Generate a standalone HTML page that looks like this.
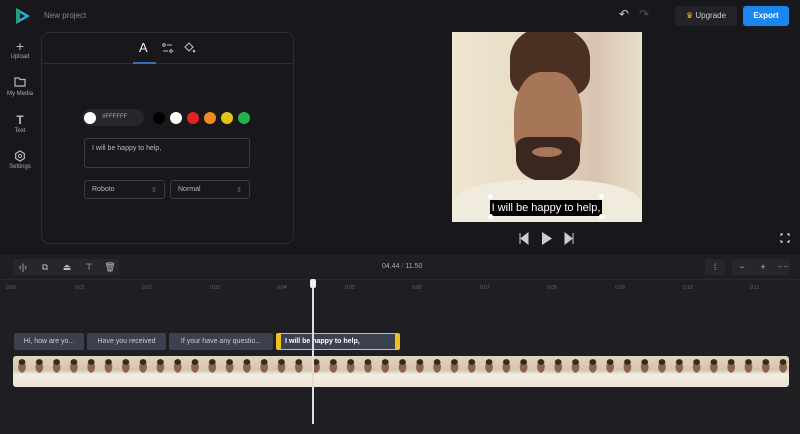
<!DOCTYPE html>
<html><head><meta charset="utf-8"><style>
*{box-sizing:border-box;margin:0;padding:0}
body{width:800px;height:434px;overflow:hidden;background:#17171c;font-family:"Liberation Sans",sans-serif;color:#ccc;position:relative}
.a{position:absolute}
.side div{position:absolute;left:0;width:40px;text-align:center;font-size:6px;color:#aaa}
.sw{position:absolute;top:112px;width:12px;height:12px;border-radius:50%}
.tl{font-size:5px;color:#666;top:285px}
.chip{position:absolute;top:333px;height:17px;background:#3b4150;border-radius:2px;font-size:7px;color:#c8ccd4;text-align:center;line-height:17px}
.btn{position:absolute;top:259px;height:16px;background:#26262b;border-radius:2px;color:#bbb;font-size:9px;text-align:center;line-height:16px}
</style></head><body>
<svg class="a" style="left:12px;top:6px" width="20" height="20" viewBox="0 0 20 20"><path d="M4 2 L18 10 L4 18 Z" fill="#1fb7d6"/><path d="M4 2 L4 18 L9 12 L9 7Z" fill="#20a080"/><path d="M8 7 L13 10 L8 13Z" fill="#17171c"/></svg>
<div class="a" style="left:44px;top:11px;font-size:8px;color:#888">New project</div>
<div class="side">
<div style="top:38px;font-size:14px;color:#bbb">+</div><div style="top:54px">Upload</div>
<div style="top:77px"><svg width="12" height="10" viewBox="0 0 12 10"><path d="M1 1h4l1 1.5h5v6.5h-10z" fill="none" stroke="#bbb" stroke-width="1.2"/></svg></div><div style="top:91px">My Media</div>
<div style="top:113px;font-size:12px;color:#bbb;font-weight:bold">T</div><div style="top:128px">Text</div>
<div style="top:150px"><svg width="12" height="12" viewBox="0 0 12 12"><path d="M6 1l4.3 2.5v5L6 11 1.7 8.5v-5z" fill="none" stroke="#bbb" stroke-width="1.2"/><circle cx="6" cy="6" r="1.6" fill="none" stroke="#bbb"/></svg></div><div style="top:164px">Settings</div>
</div>
<div class="a" style="left:41px;top:32px;width:253px;height:212px;border:1px solid #2c2c33;border-radius:8px"></div>
<div class="a" style="left:42px;top:63px;width:251px;height:1px;background:#2c2c33"></div>
<div class="a" style="left:133px;top:62px;width:23px;height:2px;background:#3b6fb5"></div>
<div class="a" style="left:139px;top:40px;font-size:13px;color:#eee">A</div>
<svg class="a" style="left:162px;top:43px" width="11" height="10" viewBox="0 0 11 10"><circle cx="2" cy="2" r="1.3" fill="none" stroke="#bbb"/><path d="M5 2h5M1 8h5" stroke="#bbb"/><circle cx="9" cy="8" r="1.3" fill="none" stroke="#bbb"/></svg>
<svg class="a" style="left:184px;top:42px" width="12" height="12" viewBox="0 0 12 12"><path d="M5 1L1 5l4 4 4-4z" fill="none" stroke="#bbb" stroke-width="1.1"/><circle cx="10" cy="9" r="1.3" fill="#bbb"/></svg>
<div class="a" style="left:82px;top:109px;width:62px;height:17px;background:#26262c;border-radius:9px"></div>
<div class="sw" style="left:84px;background:#fff"></div>
<div class="a" style="left:102px;top:114px;font-size:6px;color:#aaa">#FFFFFF</div>
<div class="sw" style="left:153px;background:#000"></div>
<div class="sw" style="left:170px;background:#fff"></div>
<div class="sw" style="left:187px;background:#e52222"></div>
<div class="sw" style="left:204px;background:#f08a22"></div>
<div class="sw" style="left:221px;background:#e2c514"></div>
<div class="sw" style="left:238px;background:#22b34c"></div>
<div class="a" style="left:84px;top:138px;width:166px;height:30px;border:1px solid #3a3a42;border-radius:3px;font-size:7px;color:#bbb;padding:6px 7px">I will be happy to help,</div>
<div class="a" style="left:84px;top:180px;width:81px;height:19px;border:1px solid #3a3a42;border-radius:3px;font-size:7px;color:#bbb;padding:5px 7px">Roboto<span style="float:right;color:#888">⇳</span></div>
<div class="a" style="left:170px;top:180px;width:80px;height:19px;border:1px solid #3a3a42;border-radius:3px;font-size:7px;color:#bbb;padding:5px 7px">Normal<span style="float:right;color:#888">⇳</span></div>
<div class="a" style="left:619px;top:7px;font-size:12px;color:#ccc">↶</div>
<div class="a" style="left:639px;top:7px;font-size:12px;color:#555">↷</div>
<div class="a" style="left:675px;top:6px;width:62px;height:20px;background:#222228;border-radius:3px;font-size:8px;color:#ccc;line-height:20px;text-align:center"><span style="color:#f5b90a">♛</span> Upgrade</div>
<div class="a" style="left:743px;top:6px;width:46px;height:20px;background:#1a86f0;border-radius:3px;font-size:8px;color:#fff;line-height:20px;text-align:center;font-weight:bold">Export</div>
<div class="a" style="left:452px;top:32px;width:190px;height:190px;overflow:hidden;background:linear-gradient(90deg,#efe6d2 0%,#e8dcc4 40%,#d8c3b0 75%,#e9dfcc 100%)">
<div class="a" style="left:58px;top:-5px;width:80px;height:70px;background:#4a3022;border-radius:45% 45% 30% 30%"></div>
<div class="a" style="left:62px;top:40px;width:68px;height:110px;background:#a77558;border-radius:40% 40% 45% 45%"></div>
<div class="a" style="left:64px;top:105px;width:64px;height:45px;background:#3a2820;border-radius:20% 20% 50% 50%"></div>
<div class="a" style="left:80px;top:115px;width:30px;height:10px;background:#a77558;border-radius:50%"></div>
<div class="a" style="left:0;top:148px;width:190px;height:60px;background:#f1ebde;border-radius:40% 40% 0 0"></div>
<div class="a" style="left:38px;top:168px;width:112px;height:16px;background:#000;color:#fff;font-size:11px;text-align:center;line-height:16px">I will be happy to help,</div>
<div class="a" style="left:36px;top:162px;width:5px;height:5px;background:#fff;border-radius:50%"></div>
<div class="a" style="left:147px;top:162px;width:5px;height:5px;background:#fff;border-radius:50%"></div>
<div class="a" style="left:36px;top:182px;width:5px;height:5px;background:#fff;border-radius:50%"></div>
<div class="a" style="left:147px;top:182px;width:5px;height:5px;background:#fff;border-radius:50%"></div>
</div>
<svg class="a" style="left:518px;top:232px" width="58" height="13" viewBox="0 0 58 13"><path d="M2 1v11M10 1L3 6.5 10 12z" fill="#ccc" stroke="#ccc"/><path d="M24 0v13l10-6.5z" fill="#ccc"/><path d="M47 1l7 5.5-7 5.5zM55 1v11" fill="#ccc" stroke="#ccc"/></svg>
<svg class="a" style="left:780px;top:233px" width="10" height="10" viewBox="0 0 10 10"><path d="M1 3V1h2M7 1h2v2M9 7v2H7M3 9H1V7" fill="none" stroke="#ccc" stroke-width="1.2"/></svg>
<div class="a" style="left:0;top:255px;width:800px;height:179px;background:#1f1f23"></div>
<div class="a" style="left:0;top:279px;width:800px;height:1px;background:#2a2a2f"></div>
<div class="btn" style="left:13px;width:106px;background:#26262b"></div>
<div class="btn" style="left:13px;width:20px;background:none">‹|›</div>
<div class="btn" style="left:35px;width:20px;background:none">⧉</div>
<div class="btn" style="left:57px;width:20px;background:none">⏏</div>
<div class="btn" style="left:79px;width:20px;background:none">⊤</div>
<div class="btn" style="left:100px;width:20px;background:none">🗑</div>
<div class="a" style="left:382px;top:263px;font-size:7px;color:#aaa">04.44 <span style="color:#666">/</span> 11.50</div>
<div class="btn" style="left:705px;width:20px">⁞</div>
<div class="btn" style="left:732px;width:58px"></div>
<div class="btn" style="left:732px;width:20px;background:none">−</div>
<div class="btn" style="left:753px;width:20px;background:none">+</div>
<div class="btn" style="left:774px;width:18px;background:none;font-size:7px">→←</div>
<div class="a tl" style="left:6px">0:00</div><div class="a tl" style="left:75px">0:01</div><div class="a tl" style="left:142px">0:02</div><div class="a tl" style="left:210px">0:03</div><div class="a tl" style="left:277px">0:04</div><div class="a tl" style="left:345px">0:05</div><div class="a tl" style="left:412px">0:06</div><div class="a tl" style="left:480px">0:07</div><div class="a tl" style="left:547px">0:08</div><div class="a tl" style="left:615px">0:09</div><div class="a tl" style="left:683px">0:10</div><div class="a tl" style="left:750px">0:11</div>
<div class="chip" style="left:14px;width:70px">Hi, how are yo...</div>
<div class="chip" style="left:87px;width:79px">Have you received</div>
<div class="chip" style="left:169px;width:104px">If your have any questio...</div>
<div class="chip" style="left:276px;width:124px;border:1px solid #f0c020;border-left:5px solid #f0c020;border-right:5px solid #f0c020;color:#fff;font-weight:bold;text-align:left;padding-left:4px;line-height:15px">I will be happy to help,</div>
<div class="a" style="left:13px;top:356px;width:776px;height:31px;border-radius:3px;background:radial-gradient(ellipse 3.5px 3px at 9px 6px,#3a2820 90%,transparent 100%) 0 0/17.3px 31px,radial-gradient(ellipse 4px 6px at 9px 11px,#8a6450 90%,transparent 100%) 0 0/17.3px 31px,linear-gradient(#e2d5c0 0%,#d4c5ae 45%,#f2ede2 60%,#ece4d4 100%)"></div>
<div class="a" style="left:312px;top:280px;width:2px;height:144px;background:#ddd"></div>
<div class="a" style="left:310px;top:279px;width:6px;height:9px;background:#eee;border-radius:2px"></div>
</body></html>
